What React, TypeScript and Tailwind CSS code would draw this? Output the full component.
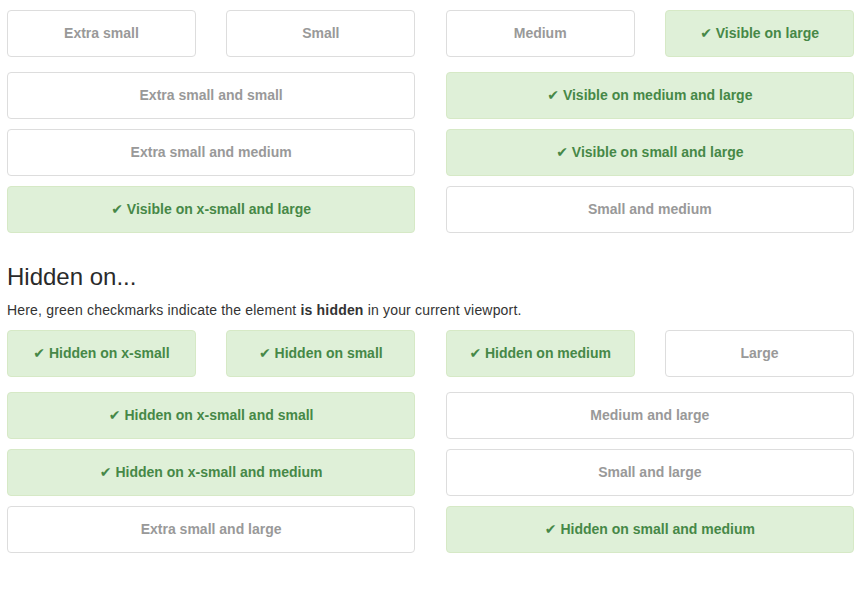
import React from 'react';

type Cell = { label: string; on: boolean; wide?: boolean };

const visibleRows: Cell[][] = [
  [
    { label: 'Extra small', on: false },
    { label: 'Small', on: false },
    { label: 'Medium', on: false },
    { label: 'Visible on large', on: true },
  ],
  [
    { label: 'Extra small and small', on: false, wide: true },
    { label: 'Visible on medium and large', on: true, wide: true },
  ],
  [
    { label: 'Extra small and medium', on: false, wide: true },
    { label: 'Visible on small and large', on: true, wide: true },
  ],
  [
    { label: 'Visible on x-small and large', on: true, wide: true },
    { label: 'Small and medium', on: false, wide: true },
  ],
];

const hiddenRows: Cell[][] = [
  [
    { label: 'Hidden on x-small', on: true },
    { label: 'Hidden on small', on: true },
    { label: 'Hidden on medium', on: true },
    { label: 'Large', on: false },
  ],
  [
    { label: 'Hidden on x-small and small', on: true, wide: true },
    { label: 'Medium and large', on: false, wide: true },
  ],
  [
    { label: 'Hidden on x-small and medium', on: true, wide: true },
    { label: 'Small and large', on: false, wide: true },
  ],
  [
    { label: 'Extra small and large', on: false, wide: true },
    { label: 'Hidden on small and medium', on: true, wide: true },
  ],
];

function TestBox({ cell }: { cell: Cell }) {
  return (
    <div
      className={
        (cell.wide ? 'col-span-2 ' : '') +
        'rounded-[4px] border px-[10px] py-[15px] text-center text-[14px] font-bold leading-[15px] ' +
        (cell.on
          ? 'border-[#d6e9c6] bg-[#dff0d8] text-[#468847]'
          : 'border-[#ddd] bg-white text-[#999]')
      }
    >
      {cell.on ? '✔ ' : ''}
      {cell.label}
    </div>
  );
}

function TestGrid({ rows }: { rows: Cell[][] }) {
  return (
    <div className="flex flex-col">
      <div className="grid grid-cols-4 gap-x-[30.5px] mb-[15px]">
        {rows[0].map((c, i) => (
          <TestBox key={i} cell={c} />
        ))}
      </div>
      <div className="grid grid-cols-4 gap-x-[30.5px] gap-y-[10px]">
        {rows.slice(1).flat().map((c, i) => (
          <TestBox key={i} cell={c} />
        ))}
      </div>
    </div>
  );
}

export default function App() {
  return (
    <div
      className="min-h-[595px] bg-white text-[#333]"
      style={{ fontFamily: '"Liberation Sans", "DejaVu Sans", Arial, sans-serif' }}
    >
      <div className="ml-[7px] w-[847px] pt-[10px]">
        <TestGrid rows={visibleRows} />
        <h3 className="mt-[31px] mb-[10px] text-[24px] font-medium leading-[1.1] text-[#2a2a2a]">Hidden on...</h3>
        <p className="mb-[10px] text-[14px] leading-[20px] tracking-[0.18px]">
          Here, green checkmarks indicate the element <strong>is hidden</strong> in your current viewport.
        </p>
        <TestGrid rows={hiddenRows} />
      </div>
    </div>
  );
}
